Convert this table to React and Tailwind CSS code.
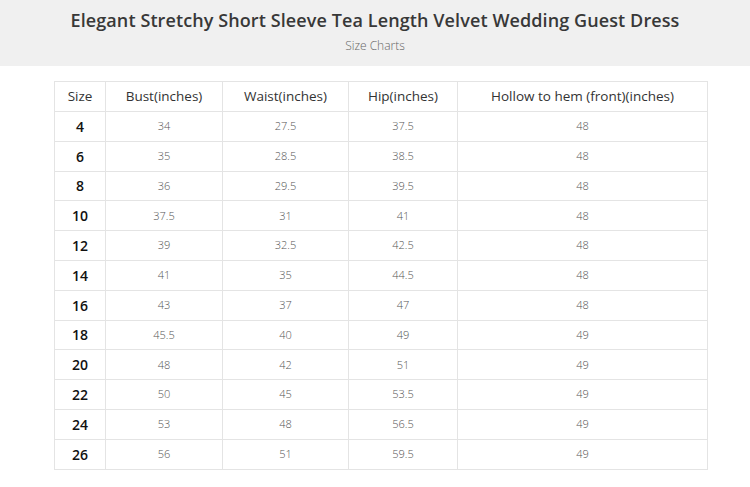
import React from 'react';

const rows = [
  ['4', '34', '27.5', '37.5', '48'],
  ['6', '35', '28.5', '38.5', '48'],
  ['8', '36', '29.5', '39.5', '48'],
  ['10', '37.5', '31', '41', '48'],
  ['12', '39', '32.5', '42.5', '48'],
  ['14', '41', '35', '44.5', '48'],
  ['16', '43', '37', '47', '48'],
  ['18', '45.5', '40', '49', '49'],
  ['20', '48', '42', '51', '49'],
  ['22', '50', '45', '53.5', '49'],
  ['24', '53', '48', '56.5', '49'],
  ['26', '56', '51', '59.5', '49'],
];

const heads = ['Size', 'Bust(inches)', 'Waist(inches)', 'Hip(inches)', 'Hollow to hem (front)(inches)'];

export default function App() {
  return (
    <div className="min-h-[487px] w-[750px] bg-white font-['Open_Sans',sans-serif]">
      <div className="h-[66px] bg-[#f0f0f0] flex flex-col items-center pt-[7px]">
        <h1 className="text-[18px] leading-[26px] font-semibold text-[#383838] tracking-[0.1px]">
          Elegant Stretchy Short Sleeve Tea Length Velvet Wedding Guest Dress
        </h1>
        <p className="text-[12px] leading-[20px] font-light text-[#666] mt-[3px]">Size Charts</p>
      </div>
      <div className="pt-[15px] pl-[54px]">
        <table className="table-fixed border-collapse w-[653px] text-center">
          <colgroup>
            <col className="w-[51px]" />
            <col className="w-[117px]" />
            <col className="w-[126px]" />
            <col className="w-[109px]" />
            <col className="w-[250px]" />
          </colgroup>
          <thead>
            <tr className="h-[30px]">
              {heads.map((h) => (
                <th key={h} className="border border-[#e4e4e4] text-[13.5px] font-normal text-[#333] p-0">{h}</th>
              ))}
            </tr>
          </thead>
          <tbody>
            {rows.map((r) => (
              <tr key={r[0]} className="h-[29.8px]">
                <td className="border border-[#e4e4e4] text-[14px] font-semibold text-[#111] p-0">{r[0]}</td>
                {r.slice(1).map((v, i) => (
                  <td key={i} className="border border-[#e4e4e4] text-[11px] font-light text-[#555] p-0">{v}</td>
                ))}
              </tr>
            ))}
          </tbody>
        </table>
      </div>
    </div>
  );
}
